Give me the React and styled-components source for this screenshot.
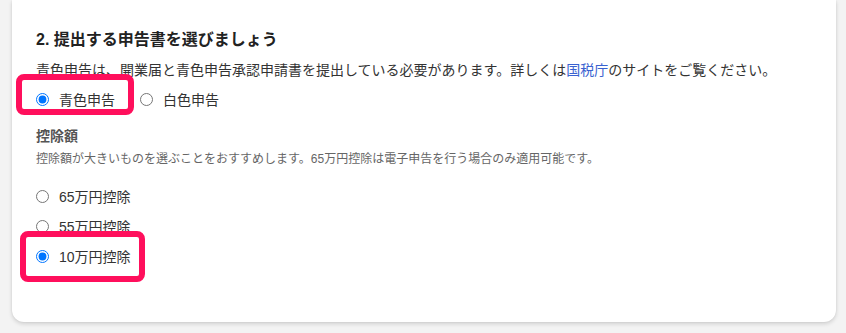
import React, { useState } from "react";
import styled, { createGlobalStyle } from "styled-components";

const Global = createGlobalStyle`
  html, body { margin: 0; padding: 0; background: #f3f3f3; }
  body { font-family: "Liberation Sans", "Noto Sans CJK JP", sans-serif; color: #333; }
`;

const Page = styled.div`
  padding: 0 10px 0 12px;
  height: 333px;
  box-sizing: border-box;
`;

const Card = styled.section`
  background: #fff;
  width: 824px;
  box-sizing: border-box;
  border-radius: 0 0 12px 12px;
  box-shadow: 0 2px 4px rgba(0, 0, 0, 0.14), 0 0 2px rgba(0, 0, 0, 0.08);
  padding: 28px 24px 51px 24px;
  display: flex;
  flex-direction: column;
`;

const Heading = styled.h2`
  margin: 0 0 6px;
  font-size: 16px;
  line-height: 24px;
  font-weight: 700;
  color: #222;
`;

const Desc = styled.p`
  margin: 0 0 5px;
  font-size: 14px;
  line-height: 24px;
  color: #333;
`;

const Link = styled.a`
  color: #3a62d0;
  text-decoration: none;
`;

const Group = styled.div`
  display: flex;
  flex-direction: ${(p) => (p.$column ? "column" : "row")};
  gap: ${(p) => (p.$column ? "0" : "25px")};
`;

const Highlight = styled.div`
  position: relative;
  &::after {
    content: "";
    position: absolute;
    left: ${(p) => p.$l}px;
    top: ${(p) => p.$t}px;
    width: ${(p) => p.$w}px;
    height: ${(p) => p.$h}px;
    border: 6.5px solid #ff0f5c;
    border-radius: 8px;
    box-sizing: border-box;
    pointer-events: none;
  }
`;

const Option = styled.label`
  display: flex;
  align-items: center;
  height: ${(p) => p.$h || 24}px;
  font-size: 14px;
  color: #333;
  cursor: pointer;
  input {
    width: 13px;
    height: 13px;
    margin: 0 10px 0 0;
  }
`;

const SubLabel = styled.div`
  font-size: 14px;
  line-height: 24px;
  font-weight: 700;
  color: #555;
  margin-top: 13px;
`;

const SubDesc = styled.div`
  font-size: 12px;
  line-height: 20px;
  color: #666;
  margin-top: 1px;
  margin-bottom: 12px;
`;

export default function App() {
  const [kind, setKind] = useState("blue");
  const [ded, setDed] = useState("10");
  return (
    <>
      <Global />
      <Page>
        <Card>
          <Heading>2. 提出する申告書を選びましょう</Heading>
          <Desc>
            青色申告は、開業届と青色申告承認申請書を提出している必要があります。詳しくは
            <Link href="#">国税庁</Link>のサイトをご覧ください。
          </Desc>
          <Group>
            <Highlight $l={-20} $t={-13} $w={118} $h={41}>
              <Option>
                <input type="radio" name="kind" checked={kind === "blue"} onChange={() => setKind("blue")} />
                青色申告
              </Option>
            </Highlight>
            <Option>
              <input type="radio" name="kind" checked={kind === "white"} onChange={() => setKind("white")} />
              白色申告
            </Option>
          </Group>
          <SubLabel>控除額</SubLabel>
          <SubDesc>
            控除額が大きいものを選ぶことをおすすめします。65万円控除は電子申告を行う場合のみ適用可能です。
          </SubDesc>
          <Group $column>
            {["65", "55"].map((v) => (
              <Option key={v} $h={30}>
                <input type="radio" name="ded" checked={ded === v} onChange={() => setDed(v)} />
                {v}万円控除
              </Option>
            ))}
            <Highlight $l={-16} $t={-10} $w={125} $h={51}>
              <Option $h={30}>
                <input type="radio" name="ded" checked={ded === "10"} onChange={() => setDed("10")} />
                10万円控除
              </Option>
            </Highlight>
          </Group>
        </Card>
      </Page>
    </>
  );
}
